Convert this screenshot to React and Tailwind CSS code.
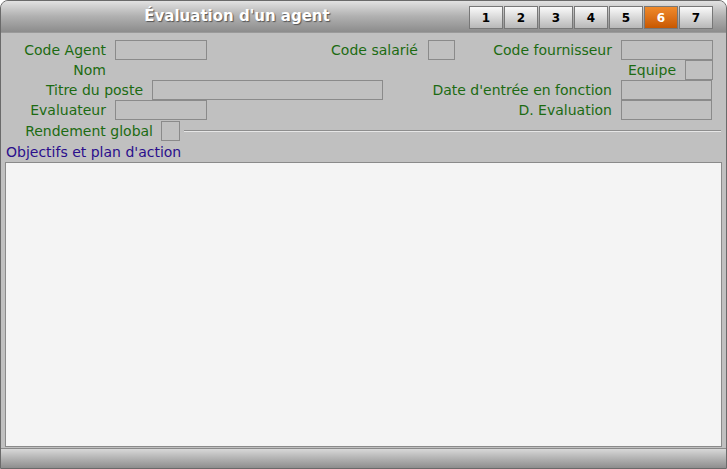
export default function App() {
  const lab = "text-[#1c6b12] text-right shrink-0";
  const box = "h-[20px] border border-[#8a8a8a] bg-[#c0c0c0] shrink-0";
  return (
    <div className="w-[727px] h-[469px] bg-[#c0c0c0] flex flex-col overflow-hidden rounded-t-[8px] border border-[#6a6a6a]" style={{ fontFamily: '"DejaVu Sans", Verdana, sans-serif', fontSize: 14 }}>
      <div className="h-[32px] shrink-0 flex items-center bg-gradient-to-b from-[#e2e2e2] via-[#b0b0b0] to-[#8c8c8c] border-b border-[#9a9a9a]">
        <div className="w-[468px] text-center font-bold text-white text-[15px] pl-[4px]" style={{ textShadow: "1px 1px 1px #555" }}>Évaluation d'un agent</div>
        <div className="flex gap-[1px] pt-[2px]">
          {[1,2,3,4,5,6,7].map(n => (
            <div key={n} className={`w-[34px] h-[23px] flex items-center justify-center text-[12px] font-bold border border-[#777] ${n===6 ? "bg-gradient-to-b from-[#f08a2a] to-[#c85800] text-white" : "bg-gradient-to-b from-[#fafafa] to-[#b8b8b8] text-black"}`}>{n}</div>
          ))}
        </div>
      </div>
      <div className="pt-[7px] flex flex-col">
        <div className="flex items-center h-[20px]">
          <div className={`${lab} w-[105px]`}>Code Agent</div>
          <div className={`${box} ml-[9px] w-[92px]`} />
          <div className={`${lab} w-[211px]`}>Code salarié</div>
          <div className={`${box} ml-[10px] w-[27px]`} />
          <div className={`${lab} w-[157px]`}>Code fournisseur</div>
          <div className={`${box} ml-[9px] w-[92px]`} />
        </div>
        <div className="flex items-center h-[20px]">
          <div className={`${lab} w-[105px]`}>Nom</div>
          <div className={`${lab} w-[570px]`}>Equipe</div>
          <div className={`${box} ml-[9px] w-[28px]`} />
        </div>
        <div className="flex items-center h-[20px]">
          <div className={`${lab} w-[142px]`}>Titre du poste</div>
          <div className={`${box} ml-[9px] w-[231px]`} />
          <div className={`${lab} w-[229px]`}>Date d'entrée en fonction</div>
          <div className={`${box} ml-[9px] w-[91px]`} />
        </div>
        <div className="flex items-center h-[20px]">
          <div className={`${lab} w-[105px]`}>Evaluateur</div>
          <div className={`${box} ml-[9px] w-[92px]`} />
          <div className={`${lab} w-[405px]`}>D. Evaluation</div>
          <div className={`${box} ml-[9px] w-[91px]`} />
        </div>
        <div className="flex items-center h-[20px] mt-[1px]">
          <div className={`${lab} w-[152px]`}>Rendement global</div>
          <div className={`${box} ml-[8px] w-[19px]`} />
          <div className="ml-[4px] w-[537px] h-[2px] border-t border-[#8e8e8e] border-b border-b-[#e6e6e6]" />
        </div>
        <div className="text-[#2a0f8c] pl-[5px] mt-[1px] h-[20px]">Objectifs et plan d'action</div>
      </div>
      <div className="mx-[4px] h-[285px] bg-[#f4f4f4] border border-[#8a8a8a]" />
      <div className="mt-auto h-[20px] bg-gradient-to-b from-[#d8d8d8] to-[#8e8e8e] border-t border-[#8a8a8a]" />
    </div>
  );
}
